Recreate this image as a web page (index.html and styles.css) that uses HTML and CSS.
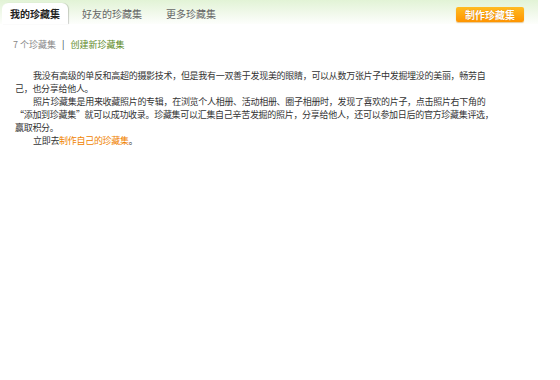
FILE: index.html
```html
<!DOCTYPE html>
<html lang="zh-CN">
<head>
    <meta charset="UTF-8">
    <title>我的珍藏集</title>
    <link rel="stylesheet" href="styles.css">
</head>
<body>
    <div class="page">
        <div class="tabs">
            <a class="tab active" href="#">我的珍藏集</a>
            <a class="tab" href="#">好友的珍藏集</a>
            <a class="tab" href="#">更多珍藏集</a>
            <a class="make-btn" href="#">制作珍藏集</a>
        </div>

        <div class="summary">
            <span class="count">7 个珍藏集</span>
            <span class="sep">|</span>
            <a class="create" href="#">创建新珍藏集</a>
        </div>

        <div class="intro">
            <p>我没有高级的单反和高超的摄影技术，但是我有一双善于发现美的眼睛，可以从数万张片子中发掘埋没的美丽，畅劳自<br>己，也分享给他人。</p>
            <p>照片珍藏集是用来收藏照片的专辑，在浏览个人相册、活动相册、圈子相册时，发现了喜欢的片子，点击照片右下角的<br>“添加到珍藏集”就可以成功收录。珍藏集可以汇集自己辛苦发掘的照片，分享给他人，还可以参加日后的官方珍藏集评选，<br>赢取积分。</p>
            <p>立即去<a class="make-link" href="#">制作自己的珍藏集</a>。</p>
        </div>
    </div>
</body>
</html>
```

FILE: styles.css
```css
body { margin: 0; font-family: "Noto Sans CJK SC", "Liberation Sans", sans-serif; color: #333; background: #fff; }
a { text-decoration: none; }
.page { width: 538px; }

.tabs { display: flex; align-items: flex-end; gap: 4px; height: 24px; background: linear-gradient(to bottom, #e2f3d6, #fdfefc); font-size: 10px; }
.tab { color: #666; padding: 0 10px; line-height: 21px; }
.tab.active { margin-left: 2px; padding: 0 8px; background: #fff; color: #222; font-weight: bold; border-radius: 6px 6px 0 0; box-shadow: 1px 0 1px rgba(0,0,0,0.18); }
.make-btn { align-self: flex-start; margin: 7px 14px 0 auto; width: 68px; height: 15px; line-height: 15px; text-align: center; color: #fff; font-weight: bold; background: linear-gradient(to bottom, #ffbb22, #ff9500); border-radius: 2px; box-shadow: 0 1px 1px rgba(200,120,0,0.4); text-shadow: 0 0 1px #d07000; }

.summary { margin-top: 14px; padding-left: 13px; font-size: 9px; line-height: 13px; }
.count { color: #888; }
.sep { color: #333; margin: 0 4px; }
.create { color: #5e8a1f; }

.intro { margin-top: 18px; padding-left: 15px; font-size: 9px; line-height: 13px; letter-spacing: -0.3px; white-space: nowrap; }
.intro p { margin: 0; text-indent: 18px; }
.make-link { color: #f08300; }
```
